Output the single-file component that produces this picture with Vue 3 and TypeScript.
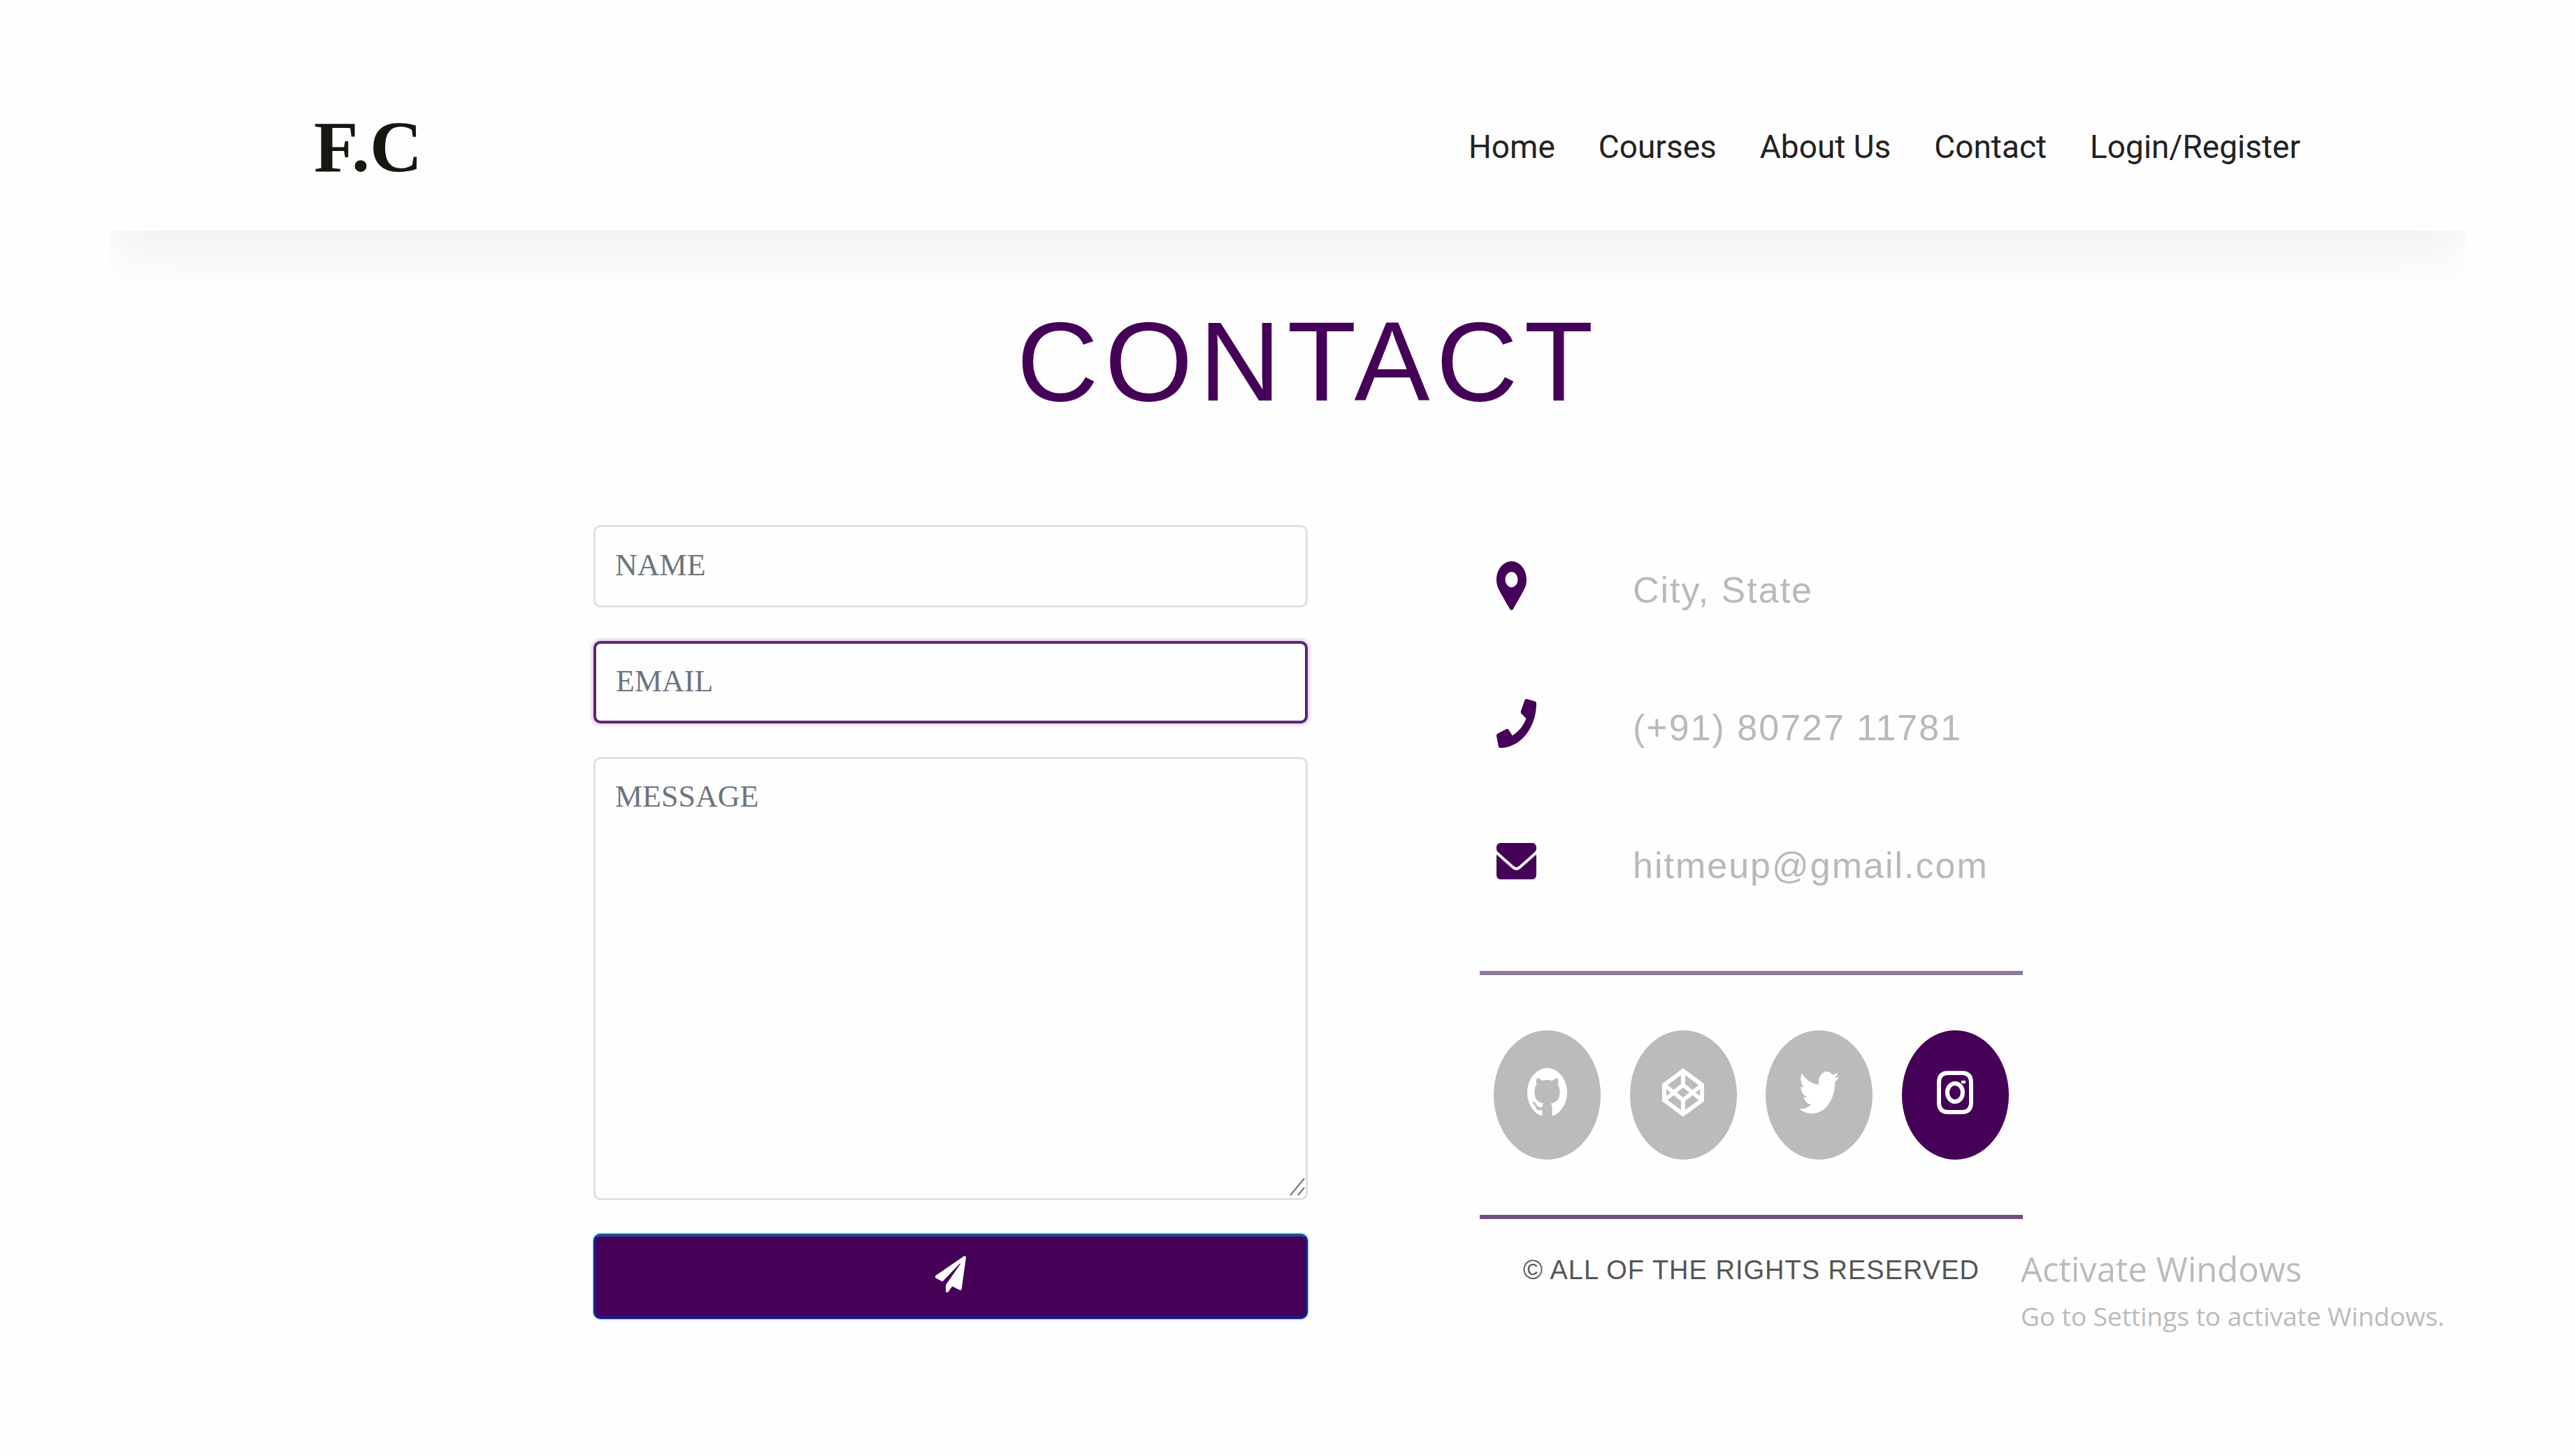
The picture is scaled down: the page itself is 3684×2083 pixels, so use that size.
<script setup lang="ts">
import { ref } from 'vue'

interface Glyph {
  viewBox: string
  path: string
  width: number
  height: number
}

interface ContactRow extends Glyph {
  text: string
  href?: string
}

interface Social extends Glyph {
  name: string
  outline?: boolean
  active?: boolean
}

const links: string[] = ['Home', 'Courses', 'About Us', 'Contact', 'Login/Register']

const name = ref('')
const email = ref('')
const message = ref('')

const rows: ContactRow[] = [
  {
    text: 'City, State',
    viewBox: '0 0 384 512',
    width: 43,
    height: 70,
    path: 'M172.268 501.67C26.97 291.031 0 269.413 0 192 0 85.961 85.961 0 192 0s192 85.961 192 192c0 77.413-26.97 99.031-172.268 309.67-9.535 13.774-29.93 13.773-39.464 0zM192 272c44.183 0 80-35.817 80-80s-35.817-80-80-80-80 35.817-80 80 35.817 80 80 80z',
  },
  {
    text: '(+91) 80727 11781',
    href: 'tel:+918072711781',
    viewBox: '0 0 512 512',
    width: 57,
    height: 70,
    path: 'M493.4 24.6l-104-24c-11.3-2.6-22.9 3.3-27.5 13.9l-48 112c-4.2 9.8-1.4 21.3 6.9 28l60.6 49.6c-36 76.7-98.9 140.5-177.2 177.2l-49.6-60.6c-6.8-8.3-18.2-11.1-28-6.9l-112 48C3.9 366.5-2 378.1.6 389.4l24 104C27.1 504.2 36.7 512 48 512c256.1 0 464-207.5 464-464 0-11.2-7.7-20.9-18.6-23.4z',
  },
  {
    text: 'hitmeup@gmail.com',
    href: 'mailto:hitmeup@gmail.com',
    viewBox: '0 64 512 384',
    width: 57,
    height: 52,
    path: 'M502.3 190.8c3.9-3.1 9.7-.2 9.7 4.7V400c0 26.5-21.5 48-48 48H48c-26.5 0-48-21.5-48-48V195.6c0-5 5.7-7.8 9.7-4.7 22.4 17.4 52.1 39.5 154.1 113.6 21.1 15.4 56.7 47.8 92.2 47.6 35.7.3 72-32.8 92.3-47.6 102-74.1 131.6-96.3 154-113.7zM256 320c23.2.4 56.6-29.2 73.4-41.4 132.7-96.3 142.8-104.7 173.4-128.7 5.8-4.5 9.2-11.5 9.2-18.9v-19c0-26.5-21.5-48-48-48H48c-26.5 0-48 21.5-48 48v19c0 7.4 3.4 14.3 9.2 18.9 30.6 23.9 40.7 32.4 173.4 128.7 16.8 12.2 50.2 41.8 73.4 41.4z',
  },
]

const socials: Social[] = [
  {
    name: 'GitHub',
    viewBox: '128 128 1536 1536',
    width: 57,
    height: 70,
    path: 'M896 128q209 0 385.5 103t279.5 279.5 103 385.5q0 251-146.5 451.5t-378.5 277.5q-27 5-40-7t-13-30q0-3 .5-76.5t.5-134.5q0-97-52-142 57-6 102.5-18t94-39 81-66.5 53-105 20.5-150.5q0-119-79-206 37-91-8-204-28-9-81 11t-92 44l-38 24q-93-26-192-26t-192 26q-16-11-42.5-27t-83.5-38.5-85-13.5q-45 113-8 204-79 87-79 206 0 85 20.5 150t52.5 105 80.5 67 94 39 102.5 18q-39 36-49 103-21 10-45 15t-57 5-65.5-21.5-55.5-62.5q-19-32-48.5-52t-49.5-24l-20-3q-21 0-29 4.5t-5 11.5 9 14 13 12l7 5q22 10 43.5 38t31.5 51l10 23q13 38 44 61.5t67 30 69.5 7 55.5-3.5l23-4q0 38 .5 88.5t.5 54.5q0 18-13 30t-40 7q-232-77-378.5-277.5t-146.5-451.5q0-209 103-385.5t279.5-279.5 385.5-103z',
  },
  {
    name: 'CodePen',
    viewBox: '0 0 60 70',
    width: 60,
    height: 70,
    outline: true,
    path: 'M30 4L57 24V46L30 66L3 46V24ZM3 24L30 46L57 24M3 46L30 24L57 46M30 4V24M30 46V66',
  },
  {
    name: 'Twitter',
    viewBox: '0 48 512 416',
    width: 57,
    height: 60,
    path: 'M459.37 151.716c.325 4.548.325 9.097.325 13.645 0 138.72-105.583 298.558-298.558 298.558-59.452 0-114.68-17.219-161.137-47.106 8.447.974 16.568 1.299 25.34 1.299 49.055 0 94.213-16.568 130.274-44.832-46.132-.975-84.792-31.188-98.112-72.772 6.498.974 12.995 1.624 19.818 1.624 9.421 0 18.843-1.3 27.614-3.573-48.081-9.747-84.143-51.98-84.143-102.985v-1.299c13.969 7.797 30.214 12.67 47.431 13.319-28.264-18.843-46.781-51.005-46.781-87.391 0-19.492 5.197-37.36 14.294-52.954 51.655 63.675 129.3 105.258 216.365 109.807-1.624-7.797-2.599-15.918-2.599-24.04 0-57.828 46.782-104.934 104.934-104.934 30.213 0 57.502 12.67 76.67 33.137 23.715-4.548 46.456-13.32 66.599-25.34-7.798 24.366-24.366 44.833-46.132 57.827 21.117-2.273 41.584-8.122 60.426-16.243-14.292 20.791-32.161 39.308-52.628 54.253z',
  },
  {
    name: 'Instagram',
    viewBox: '0 0 52 62',
    width: 52,
    height: 62,
    outline: true,
    active: true,
    path: 'M16 3H36Q49 3 49 17V45Q49 59 36 59H16Q3 59 3 45V17Q3 3 16 3ZM26 18A11 13 0 1 1 26 44A11 13 0 1 1 26 18ZM38 14V18',
  },
]
</script>

<template>
  <div class="page">
    <header class="header">
      <a class="logo" href="#">F.C</a>
      <nav class="nav">
        <a v-for="link in links" :key="link" href="#">{{ link }}</a>
      </nav>
    </header>

    <main class="contact">
      <h1>CONTACT</h1>
      <div class="columns">
        <form class="form" @submit.prevent>
          <input v-model="name" type="text" placeholder="NAME" aria-label="Name" />
          <input v-model="email" class="focused" type="email" placeholder="EMAIL" aria-label="Email" />
          <div class="message">
            <textarea v-model="message" placeholder="MESSAGE" aria-label="Message"></textarea>
            <svg class="grip" viewBox="0 0 22 26" aria-hidden="true">
              <path d="M1 25L21 1M12 25L21 14" />
            </svg>
          </div>
          <button type="submit" aria-label="Send">
            <svg width="44" height="52" viewBox="0 0 512 512" preserveAspectRatio="none">
              <path
                d="M476 3.2L12.5 270.6c-18.1 10.4-15.8 35.6 2.2 43.2L121 358.4l287.3-253.2c5.5-4.9 13.3 2.6 8.6 8.3L176 407v80.5c0 23.6 28.5 32.9 42.5 15.8L282 426l124.6 52.2c14.2 6 30.4-2.9 33-18.2l72-432C515 7.8 493.3-6.8 476 3.2z"
              />
            </svg>
          </button>
        </form>

        <aside class="details">
          <ul class="rows">
            <li v-for="row in rows" :key="row.text">
              <span class="icon">
                <svg :width="row.width" :height="row.height" :viewBox="row.viewBox" preserveAspectRatio="none">
                  <path :d="row.path" />
                </svg>
              </span>
              <a v-if="row.href" class="value" :href="row.href">{{ row.text }}</a>
              <span v-else class="value">{{ row.text }}</span>
            </li>
          </ul>
          <hr />
          <div class="socials">
            <a
              v-for="social in socials"
              :key="social.name"
              href="#"
              :aria-label="social.name"
              :class="{ active: social.active }"
            >
              <svg
                :class="{ outline: social.outline }"
                :width="social.width"
                :height="social.height"
                :viewBox="social.viewBox"
                preserveAspectRatio="none"
              >
                <path :d="social.path" />
              </svg>
            </a>
          </div>
          <hr class="strong" />
          <p class="copyright">© ALL OF THE RIGHTS RESERVED</p>
        </aside>
      </div>
    </main>

    <div class="watermark">
      <div class="watermark-title">Activate Windows</div>
      <div class="watermark-text">Go to Settings to activate Windows.</div>
    </div>
  </div>
</template>

<style>
body {
  margin: 0;
  background: #fefefe;
}
</style>

<style scoped>
* {
  box-sizing: border-box;
}

.page {
  margin: 0 157px;
  min-height: 100vh;
  overflow: hidden;
  font-family: "Liberation Sans", sans-serif;
}

a {
  color: inherit;
  text-decoration: none;
}

.header {
  display: flex;
  align-items: center;
  justify-content: space-between;
  height: 330px;
  padding: 90px 236px 0 292px;
  background: #fefefe;
  box-shadow: 0 30px 80px rgba(8, 21, 66, 0.06);
}

.logo {
  color: #17160f;
  font: bold 104px/120px "Liberation Serif", serif;
}

.nav {
  display: flex;
  gap: 62px;
  color: #222;
  font: 46px/60px Roboto, sans-serif;
}

.contact {
  padding: 87px 633px 0 692px;
}

h1 {
  margin: 0 0 134px;
  color: #450057;
  font-size: 162px;
  font-weight: 400;
  line-height: 200px;
  letter-spacing: 9px;
  text-align: center;
}

.columns {
  display: grid;
  grid-template-columns: minmax(0, 1022fr) minmax(0, 777fr);
  gap: 246px;
}

.form {
  display: flex;
  flex-direction: column;
  gap: 48px;
}

input,
textarea {
  display: block;
  width: 100%;
  padding: 0 28px 4px;
  border: 3px solid #dfe0e4;
  border-radius: 10px;
  outline: none;
  background: #fefefe;
  color: #495057;
  font: 44px/60px "Liberation Serif", serif;
}

input {
  height: 118px;
}

textarea {
  height: 634px;
  padding-top: 24px;
  resize: none;
}

::placeholder {
  color: #6c757d;
  opacity: 1;
}

.focused {
  border: 4px solid #5a2a6c;
  box-shadow: 0 0 4px 3px #e9d0f0;
}

.message {
  position: relative;
}

.grip {
  position: absolute;
  right: 4px;
  bottom: 6px;
  width: 22px;
  height: 26px;
  fill: none;
  stroke: #777;
  stroke-width: 2;
}

button {
  display: flex;
  align-items: center;
  justify-content: center;
  height: 122px;
  padding: 0 0 6px;
  border: 4px solid #1c1a86;
  border-top-color: #1d4f96;
  border-radius: 10px;
  background: #450057;
  box-shadow: 0 0 2px 1px #8cc8f4;
  fill: #fff;
}

.details {
  padding-top: 27px;
}

.rows {
  display: flex;
  flex-direction: column;
  gap: 77px;
  margin: 0;
  padding: 0 0 0 24px;
  list-style: none;
}

.rows li {
  display: flex;
  align-items: center;
  gap: 138px;
  height: 120px;
}

.icon {
  display: flex;
  width: 57px;
  fill: #450057;
}

.value {
  padding-top: 12px;
  color: #b9b9b9;
  font-size: 52px;
  line-height: 70px;
  letter-spacing: 2px;
  white-space: nowrap;
}

hr {
  height: 6px;
  margin: 97px 0 79px;
  border: 0;
  background: #8f7a98;
}

hr.strong {
  margin: 79px 0 43px;
  background: #6f5080;
}

.socials {
  display: flex;
  justify-content: space-between;
  padding: 0 20px;
}

.socials a {
  display: flex;
  align-items: center;
  justify-content: center;
  width: 153px;
  height: 185px;
  padding-bottom: 8px;
  border-radius: 50%;
  background: #bbb;
  fill: #fff;
}

.socials a.active {
  background: #450057;
}

.socials .outline {
  fill: none;
  stroke: #fff;
  stroke-width: 6;
}

.copyright {
  margin: 0;
  color: #555;
  font-size: 38px;
  line-height: 60px;
  letter-spacing: 1px;
  text-align: center;
  white-space: nowrap;
}

.watermark {
  position: absolute;
  right: 191px;
  bottom: 170px;
  width: 602px;
  color: #bbb;
  font-family: "Open Sans", sans-serif;
  white-space: nowrap;
}

.watermark-title {
  font-size: 49px;
  line-height: 76px;
}

.watermark-text {
  font-size: 37px;
  line-height: 60px;
}
</style>
